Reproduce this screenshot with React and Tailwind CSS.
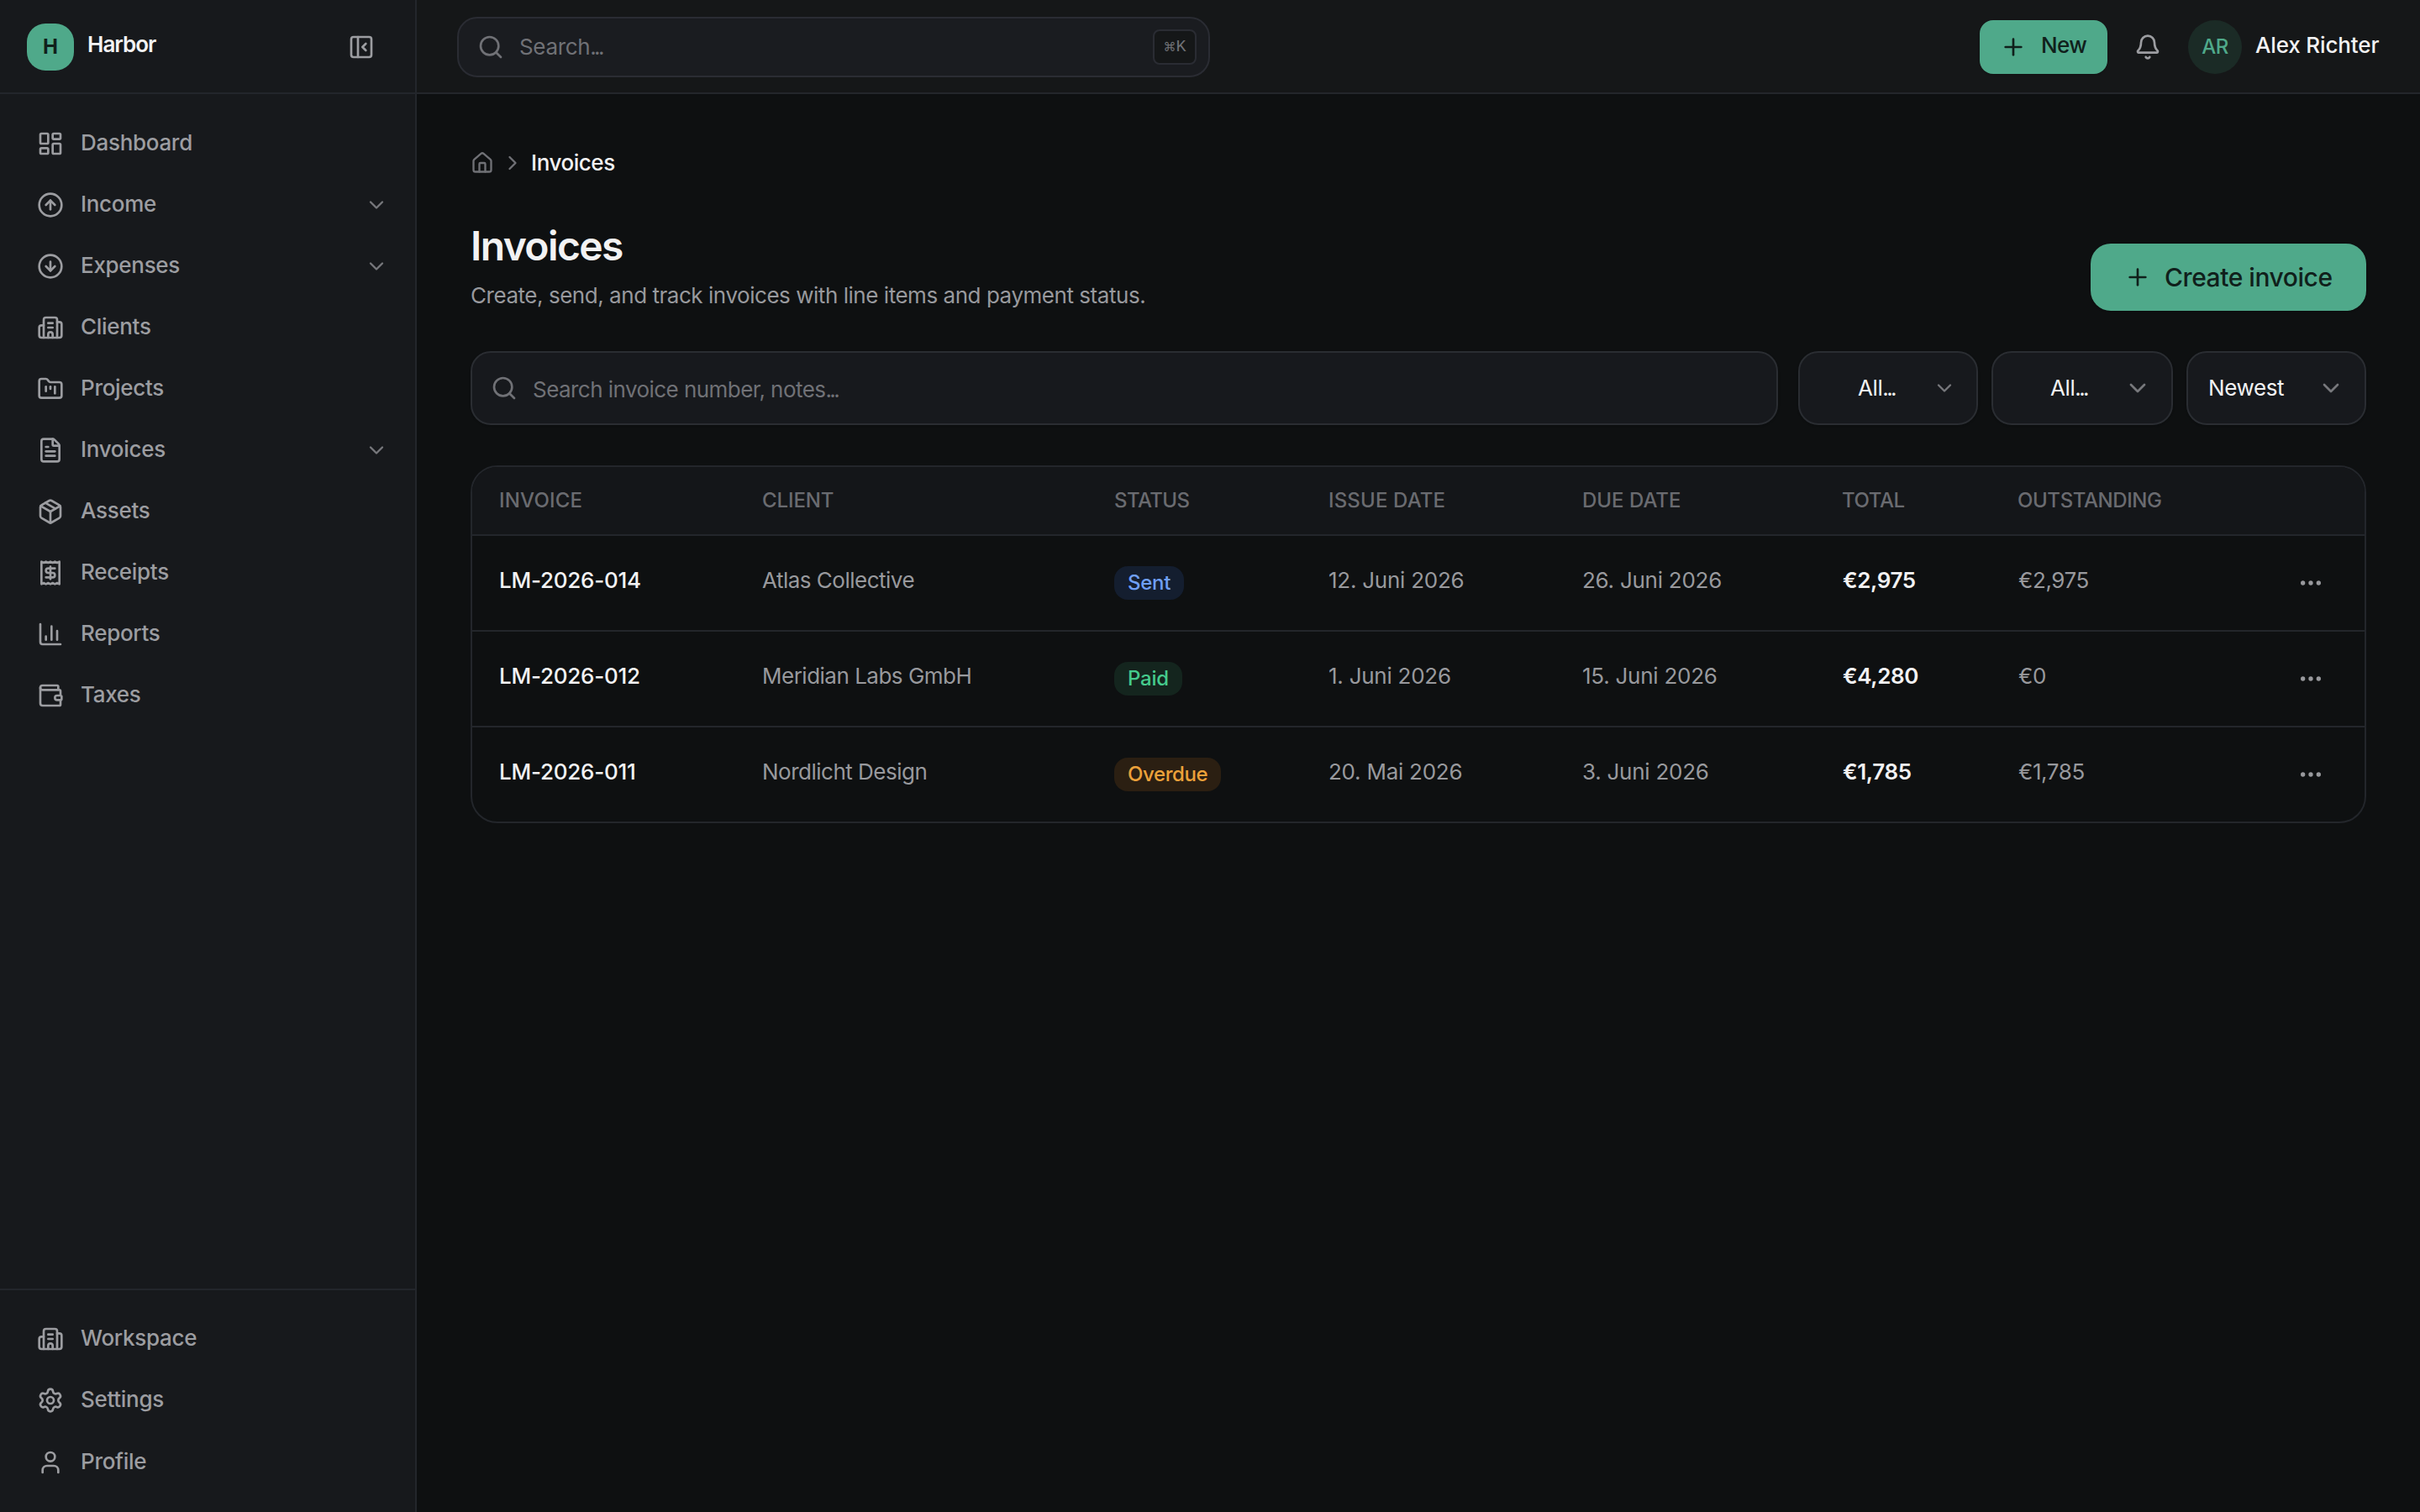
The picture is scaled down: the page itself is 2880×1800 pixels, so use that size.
import {
  Bell,
  Building2,
  ChartColumn,
  ChevronDown,
  ChevronRight,
  CircleArrowDown,
  CircleArrowUp,
  Ellipsis,
  FileText,
  FolderKanban,
  House,
  LayoutDashboard,
  Package,
  PanelLeftClose,
  Plus,
  Receipt,
  Search,
  Settings,
  User,
  Wallet,
} from "lucide-react";

const mainNav = [
  { label: "Dashboard", icon: LayoutDashboard },
  { label: "Income", icon: CircleArrowUp, expandable: true },
  { label: "Expenses", icon: CircleArrowDown, expandable: true },
  { label: "Clients", icon: Building2 },
  { label: "Projects", icon: FolderKanban },
  { label: "Invoices", icon: FileText, expandable: true },
  { label: "Assets", icon: Package },
  { label: "Receipts", icon: Receipt },
  { label: "Reports", icon: ChartColumn },
  { label: "Taxes", icon: Wallet },
];

const bottomNav = [
  { label: "Workspace", icon: Building2 },
  { label: "Settings", icon: Settings },
  { label: "Profile", icon: User },
];

const invoices = [
  {
    number: "LM-2026-014",
    client: "Atlas Collective",
    status: "Sent",
    issued: "12. Juni 2026",
    due: "26. Juni 2026",
    total: "€2,975",
    outstanding: "€2,975",
  },
  {
    number: "LM-2026-012",
    client: "Meridian Labs GmbH",
    status: "Paid",
    issued: "1. Juni 2026",
    due: "15. Juni 2026",
    total: "€4,280",
    outstanding: "€0",
  },
  {
    number: "LM-2026-011",
    client: "Nordlicht Design",
    status: "Overdue",
    issued: "20. Mai 2026",
    due: "3. Juni 2026",
    total: "€1,785",
    outstanding: "€1,785",
  },
];

const statusStyles = {
  Sent: "bg-[#141e2f] text-[#6f9ff5]",
  Paid: "bg-[#14251e] text-[#45cb8c]",
  Overdue: "bg-[#2b1f12] text-[#eba13a] tracking-[-0.4px]",
};

const columns =
  "grid grid-cols-[313px_419px_255px_302px_309px_209px_1fr] items-center";

const NavItem = ({ item }) => {
  const Icon = item.icon;
  return (
    <a
      href="#"
      className="flex h-[69px] items-center gap-5 rounded-2xl pr-4 pl-7 text-[#9c9da1]"
    >
      <Icon size={32} className="shrink-0" />
      <span className="flex-1 pb-0.5 text-[26px] leading-9 font-medium tracking-[-0.3px]">
        {item.label}
      </span>
      {item.expandable && <ChevronDown size={28} className="text-[#77787c]" />}
    </a>
  );
};

const Sidebar = () => (
  <aside className="flex w-[496px] shrink-0 flex-col border-r-2 border-[#23262b] bg-[#17191c]">
    <div className="flex h-28 items-center border-b-2 border-[#23262b] pt-0.5 pr-12 pl-8">
      <div className="flex size-14 items-center justify-center rounded-[22px] bg-[#4fa98a] text-2xl font-bold text-[#10201b]">
        H
      </div>
      <span className="flex-1 pb-[7px] pl-4 text-[26px] font-semibold tracking-[-1px] text-[#f2f2f3]">
        Harbor
      </span>
      <button className="text-[#9c9da1]" aria-label="Collapse sidebar">
        <PanelLeftClose size={32} />
      </button>
    </div>

    <nav className="flex flex-1 flex-col gap-[4.1px] px-4 py-6">
      {mainNav.map((item) => (
        <NavItem key={item.label} item={item} />
      ))}
    </nav>

    <nav className="flex flex-col gap-[4.1px] border-t-2 border-[#23262b] px-4 pt-6 pb-[25px]">
      {bottomNav.map((item) => (
        <NavItem key={item.label} item={item} />
      ))}
    </nav>
  </aside>
);

const Dots = () => <span className="tracking-[-2.6px]">...</span>;

const TopBar = () => (
  <header className="flex h-28 items-center border-b-2 border-[#23262b] bg-[#151718] px-12 pt-0.5">
    <div className="flex h-[72px] w-[896px] items-center rounded-3xl border-2 border-[#2a2c33] bg-[#1a1c20] pr-3.5 pl-[22px] text-[#707176]">
      <Search size={32} />
      <span className="flex-1 pb-0.5 pl-[18px] text-[26px] tracking-[-0.35px]">
        Search
        <Dots />
      </span>
      <kbd className="flex h-[42px] w-[52px] items-center justify-center rounded-lg border-2 border-[#2a2c33] bg-[#151718] font-['Liberation_Mono',monospace] text-xl">
        <span className="font-['DejaVu_Sans',sans-serif] text-[15px]">⌘</span>K
      </kbd>
    </div>

    <div className="ml-auto flex items-center">
      <button className="flex h-16 w-38 items-center gap-[17px] rounded-2xl bg-[#4fa98a] pl-6 text-[#10201b] shadow-sm">
        <Plus size={32} />
        <span className="pb-1.5 text-[26px] font-medium tracking-[-0.6px]">
          New
        </span>
      </button>
      <Bell size={32} className="ml-8 text-[#9c9da1]" />
      <div className="ml-8 flex size-16 items-center justify-center rounded-full bg-[#1b2b26] text-2xl font-medium tracking-[-0.5px] text-[#4fa98a]">
        AR
      </div>
      <span className="ml-4 w-[148px] pb-1.5 text-[26px] font-medium tracking-[-0.15px] whitespace-nowrap text-[#f2f2f3]">
        Alex Richter
      </span>
    </div>
  </header>
);

const Filters = () => (
  <div className="mt-12 flex h-[88px] gap-6">
    <div className="flex flex-1 items-center rounded-3xl border-2 border-[#2a2d32] bg-[#17191d] pl-[22px] text-[#707176] shadow-sm">
      <Search size={32} />
      <span className="pt-0.5 pl-[18px] text-[26px] tracking-[-0.55px]">
        Search invoice number, notes
        <Dots />
      </span>
    </div>
    <div className="grid grid-cols-[214px_216px_214px] gap-4">
      {["All", "All", "Newest"].map((label, i) => (
        <button
          key={i}
          className="flex items-center rounded-3xl border-2 border-[#2a2d32] bg-[#17191d] px-6 text-[#f2f2f3] shadow-sm"
        >
          <span
            className={`flex-1 pb-0.5 text-[26px] tracking-[-0.4px] ${
              label === "Newest" ? "text-left" : "text-center"
            }`}
          >
            {label}
            {label === "All" && <Dots />}
          </span>
          <ChevronDown
            size={i === 0 ? 28 : 32}
            className="shrink-0 text-[#77787c]"
          />
        </button>
      ))}
    </div>
  </div>
);

const InvoiceTable = () => (
  <div className="mt-12 overflow-hidden rounded-[32px] border-2 border-[#23262b]">
    <div
      className={`${columns} h-[82px] border-b-2 border-[#23262b] bg-[#141619] pl-0.5 text-2xl font-medium text-[#6a6b70]`}
    >
      <span className="pl-[30px] tracking-[0.2px]">INVOICE</span>
      <span className="pl-[30px] tracking-[-0.1px]">CLIENT</span>
      <span className="pl-[30px] tracking-[-0.6px]">STATUS</span>
      <span className="pl-[30px] tracking-[0.15px]">ISSUE DATE</span>
      <span className="pl-[30px]">DUE DATE</span>
      <span className="pl-[30px] tracking-[-0.4px]">TOTAL</span>
      <span className="pl-[30px] tracking-[-0.4px]">OUTSTANDING</span>
    </div>
    {invoices.map((inv) => (
      <div
        key={inv.number}
        className={`${columns} h-[114px] border-b-2 border-[#23262b] pl-0.5 text-[26px] tracking-[-0.25px] text-[#98999d] last:h-28 last:border-b-0`}
      >
        <span className="pb-[7px] pl-[30px] font-medium tracking-[-0.25px] text-[#f2f2f3]">
          {inv.number}
        </span>
        <span className="pb-[7px] pl-[30px] tracking-[-0.5px]">
          {inv.client}
        </span>
        <span className="flex pl-[30px]">
          <span
            className={`flex h-10 items-center rounded-2xl px-4 text-2xl font-medium ${statusStyles[inv.status]}`}
          >
            {inv.status}
          </span>
        </span>
        <span className="pb-[7px] pl-[30px]">{inv.issued}</span>
        <span className="pb-[7px] pl-[30px]">{inv.due}</span>
        <span className="pb-[7px] pl-[31px] font-semibold tracking-[-0.4px] text-[#f2f2f3]">
          {inv.total}
        </span>
        <span className="flex items-center justify-between pr-12 pl-[31px]">
          <span className="pb-[7px] tracking-[-0.4px]">{inv.outstanding}</span>
          <Ellipsis size={32} />
        </span>
      </div>
    ))}
  </div>
);

export default function App() {
  return (
    <div className="flex h-[1800px] w-[2880px] overflow-hidden bg-[#0e1011] font-['Inter',sans-serif]">
      <Sidebar />
      <div className="flex flex-1 flex-col">
        <TopBar />
        <main className="flex-1 px-16 pt-16">
          {/* Breadcrumb */}
          <div className="flex h-9 items-center text-[26px]">
            <House size={28} className="text-[#707176]" />
            <ChevronRight size={28} className="ml-2 text-[#707176]" />
            <span className="ml-2 pb-0.5 font-medium tracking-[-0.45px] text-[#f2f2f3]">
              Invoices
            </span>
          </div>

          <div className="mt-12 flex items-end justify-between">
            <div>
              <h1 className="text-5xl leading-[66px] font-semibold tracking-[-1.6px] text-[#f2f2f3]">
                Invoices
              </h1>
              <p className="mt-2 text-[26px] leading-9 tracking-[-0.46px] text-[#98999d]">
                Create, send, and track invoices with line items and payment
                status.
              </p>
            </div>
            <button className="flex h-20 w-[328px] items-center gap-4 rounded-3xl bg-[#4fa98a] pl-10 text-[#10201b] shadow-sm">
              <Plus size={32} />
              <span className="text-[30px] font-medium tracking-[-0.45px]">
                Create invoice
              </span>
            </button>
          </div>

          <Filters />
          <InvoiceTable />
        </main>
      </div>
    </div>
  );
}
